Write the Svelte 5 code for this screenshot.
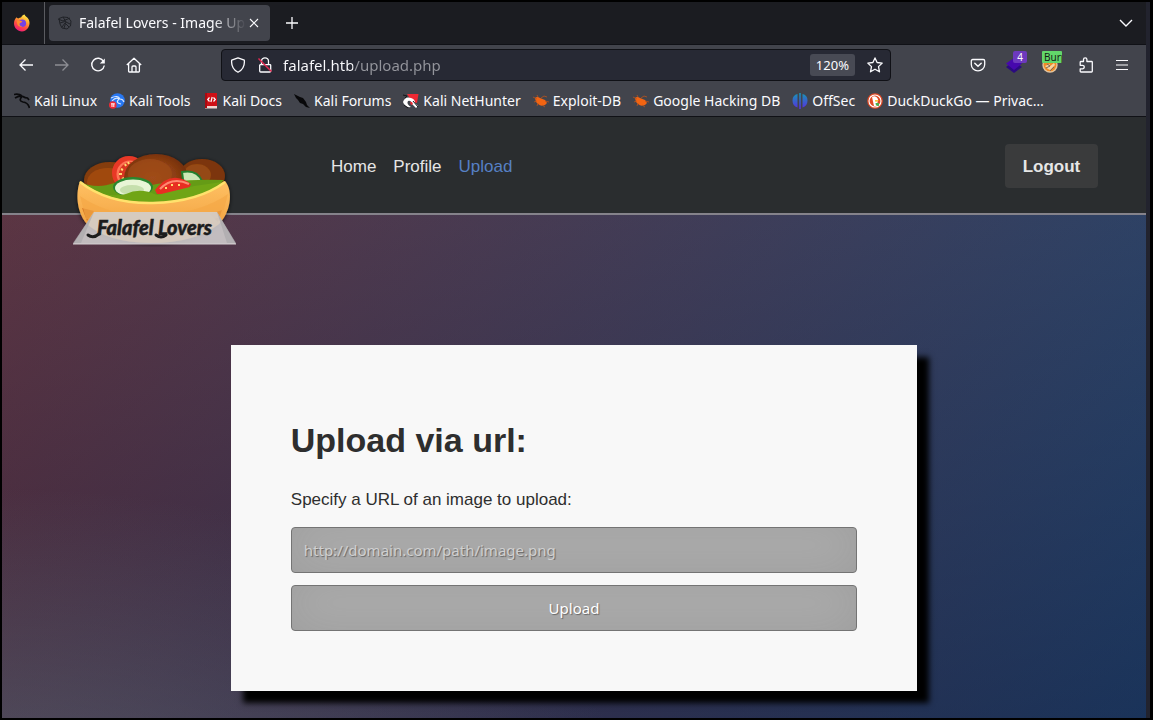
<script>
  const bookmarks = [
    { icon: 'kali', label: 'Kali Linux' },
    { icon: 'tools', label: 'Kali Tools' },
    { icon: 'docs', label: 'Kali Docs' },
    { icon: 'forums', label: 'Kali Forums' },
    { icon: 'nethunter', label: 'Kali NetHunter' },
    { icon: 'exploit', label: 'Exploit-DB' },
    { icon: 'exploit', label: 'Google Hacking DB' },
    { icon: 'offsec', label: 'OffSec' },
    { icon: 'duck', label: 'DuckDuckGo — Privac…' }
  ];
  const links = ['Home', 'Profile', 'Upload'];
  let address = $state('falafel.htb/upload.php');
  let imageUrl = $state('');
</script>

<div class="window">
  <div class="tabs">
    <div class="brand">
      <svg width="18" height="18" viewBox="0 0 18 18">
        <defs>
          <linearGradient id="fox" x1="0.8" y1="0" x2="0.3" y2="1">
            <stop offset="0" stop-color="#fff44f" />
            <stop offset="0.35" stop-color="#ffa930" />
            <stop offset="0.65" stop-color="#ff5040" />
            <stop offset="1" stop-color="#f0157c" />
          </linearGradient>
        </defs>
        <path d="M3.5 3.2C4 4 4.500 4.300 5.300 4.400C6.300 3.600 7.500 3.500 8 3.500C9 1.500 10.500.800 11.600.600C12 2.800 14.400 3 15.600 5.200C18.300 10.400 14.800 17.400 9 17.400C4.600 17.400 1 14 1 9.600C1 7 1.700 5 3.500 3.200Z" fill="url(#fox)" />
        <circle cx="9.300" cy="9.300" r="3.800" fill="#7542e5" />
        <path d="M4 7C6 6 7.600 6.500 9.400 7.500C8.800 8.700 7.200 8.600 6.600 9.500C6.200 11 7.500 12.500 9.600 12.200C6 14 3.500 11 4 7Z" fill="#ff8a2c" />
      </svg>
    </div>
    <div class="tab">
      <svg width="16" height="16" viewBox="0 0 16 16" fill="none" stroke="#202227">
        <path d="M2 3.500L6 2L11 2.500L14 6L13.500 11L10 14L5 13L3 9Z" />
        <path d="M1 4L6 6L13 3M3 8L8 6.500L13 9M5 12L8 8L12 12M6 2L9 7L7 13" />
      </svg>
      <span class="title">Falafel Lovers - Image Upload</span>
      <button class="close" aria-label="Close tab">
        <svg width="10" height="10" viewBox="0 0 10 10" stroke="#fbfbfe" stroke-width="1.100"><path d="M1 1L9 9M9 1L1 9" /></svg>
      </button>
    </div>
    <button class="tool" aria-label="New tab">
      <svg width="14" height="14" viewBox="0 0 14 14" stroke="#fbfbfe" stroke-width="1.300"><path d="M7 1V13M1 7H13" /></svg>
    </button>
    <button class="tool all" aria-label="List all tabs">
      <svg width="14" height="14" viewBox="0 0 14 14" fill="none" stroke="#fbfbfe" stroke-width="1.400"><path d="M1 4L7 10L13 4" /></svg>
    </button>
  </div>

  <div class="toolbar">
    <button class="tool" aria-label="Back">
      <svg width="16" height="16" viewBox="0 0 16 16" fill="none" stroke="#fbfbfe" stroke-width="1.300"><path d="M15 8H2M7.500 2.500L2 8L7.500 13.500" /></svg>
    </button>
    <button class="tool dim" aria-label="Forward" disabled>
      <svg width="16" height="16" viewBox="0 0 16 16" fill="none" stroke="#fbfbfe" stroke-width="1.300"><path d="M1 8H14M8.500 2.500L14 8L8.500 13.500" /></svg>
    </button>
    <button class="tool" aria-label="Reload">
      <svg width="16" height="16" viewBox="0 0 16 16" fill="none" stroke="#fbfbfe" stroke-width="1.400"><path d="M13.600 4.500A6.300 6.300 0 1 0 14.300 8.500" /><path d="M14.800 1.500V6.500H9.800Z" fill="#fbfbfe" stroke="none" /></svg>
    </button>
    <button class="tool" aria-label="Home">
      <svg width="16" height="16" viewBox="0 0 16 16" fill="none" stroke="#fbfbfe" stroke-width="1.300" stroke-linejoin="round"><path d="M.800 8L8 1.200L15.200 8M2.600 6.600V14.200Q2.600 15 3.400 15H12.600Q13.400 15 13.400 14.200V6.600M6 15V10Q6 9 7 9H9Q10 9 10 10V15" /></svg>
    </button>
    <div class="spring"></div>
    <div class="urlbar">
      <svg width="16" height="16" viewBox="0 0 16 16" fill="none" stroke="#fbfbfe" stroke-width="1.300" stroke-linejoin="round"><path d="M8 .900L14.300 3.200Q15.200 11.500 8 15.300Q.800 11.500 1.700 3.200Z" /></svg>
      <svg class="lock" width="16" height="16" viewBox="0 0 16 16" fill="none" stroke="#fbfbfe" stroke-width="1.300"><path d="M4.500 7V4.300A3.500 3.500 0 0 1 11.500 4.300V7M3 7.600H13Q13.700 7.600 13.700 8.300V14Q13.700 15 12.700 15H3.700Q2.700 15 2.700 14V7.600" /><path d="M1.500 1.500L14.500 14.500" stroke="#e22850" stroke-width="1.500" /></svg>
      <input class="address" aria-label="Address" spellcheck="false" bind:value={address} />
      <button class="zoom">120%</button>
      <button class="star" aria-label="Bookmark this page">
        <svg width="16" height="16" viewBox="0 0 16 16" fill="none" stroke="#fbfbfe" stroke-width="1.300" stroke-linejoin="round"><path d="M8 .900L10.100 5.500L15.200 6.100L11.500 9.600L12.500 14.800L8 12.200L3.500 14.800L4.500 9.600L.800 6.100L5.900 5.500Z" /></svg>
      </button>
    </div>
    <div class="spring"></div>
    <button class="tool" aria-label="Save to Pocket">
      <svg width="16" height="16" viewBox="0 0 16 16" fill="none" stroke="#fbfbfe" stroke-width="1.300" stroke-linecap="round"><path d="M2.800 2.500H13.200Q14.700 2.500 14.700 4V7.500A6.700 6.400 0 0 1 1.300 7.500V4Q1.300 2.500 2.800 2.500Z" /><path d="M4.800 6.300L8 9.300L11.200 6.300" stroke-width="1.500" /></svg>
    </button>
    <button class="tool ext" aria-label="Wappalyzer">
      <svg width="16" height="16" viewBox="0 0 16 16"><path d="M0 10L8 4L16 10L8 16Z" fill="#2b0a80" /><path d="M0 6.500L8 1L16 6.500L8 13Z" fill="#4608ad" /></svg>
      <span class="badge">4</span>
    </button>
    <button class="tool ext" aria-label="Proxy">
      <svg width="16" height="16" viewBox="0 0 16 16"><circle cx="8" cy="8" r="7.700" fill="#e3c49e" /><circle cx="8" cy="8" r="6.300" fill="#f18a24" /><path d="M3 9L8 7L7 10L12 6L13 8L8 13L6 12Z" fill="#f6d2a4" /><path d="M5 7L8 9L4 11M12 10L8 14" stroke="#7b6a5c" fill="none" /></svg>
      <span class="badge green">Burp</span>
    </button>
    <button class="tool" aria-label="Extensions">
      <svg width="16" height="16" viewBox="0 0 16 16" fill="none" stroke="#fbfbfe" stroke-width="1.300" stroke-linejoin="round"><path d="M5.500 4.500V2.500A1.700 1.700 0 0 1 8.900 2.500V4.500H13.500Q14.300 4.500 14.300 5.300V14.300Q14.300 15 13.500 15H3Q2.200 15 2.200 14.300V11.800H4.500A1.700 1.700 0 0 0 4.500 8.300H2.200V5.300Q2.200 4.500 3 4.500Z" /></svg>
    </button>
    <button class="tool" aria-label="Open menu">
      <svg width="14" height="14" viewBox="0 0 14 14" stroke="#fbfbfe" stroke-width="1.200"><path d="M1 2.500H13M1 7H13M1 11.500H13" /></svg>
    </button>
  </div>

  <nav class="bookmarks" aria-label="Bookmarks">
    {#each bookmarks as mark}
      <a href="#top">
        <svg width="16" height="16" viewBox="0 0 16 16">
          {#if mark.icon === 'kali'}
            <path d="M0 1.500Q5 .500 8 3M1 5Q5 2.500 9 3.500Q11 5 13.500 5L15 7M8 3.500Q4 8 9 9Q14 9.500 15.500 15" fill="none" stroke="#0b0b0d" stroke-width="1.700" />
          {:else if mark.icon === 'tools'}
            <circle cx="8.500" cy="7.500" r="7.300" fill="#2777f2" />
            <path d="M2 5Q9 1.500 11 6Q14 6 15 9M3 8Q7 3.500 10 6Q6 10 12 11" fill="none" stroke="#d8e8ff" stroke-width="1.100" />
            <circle cx="3.800" cy="12" r="3.800" fill="#ed2b36" />
            <path d="M2 10.800H5.800M3 11V14M4.800 11V14" stroke="#fff" />
          {:else if mark.icon === 'docs'}
            <path d="M2 0H14V15H2Z" fill="#cf1016" /><path d="M2 13H14V15.500H2Z" fill="#f1d5d0" /><path d="M2 0H4V15H2Z" fill="#a90b12" />
            <path d="M6.500 4.500L4.700 6.500L6.500 8.500M10.500 4.500L12.300 6.500L10.500 8.500M9.200 4L7.900 9" fill="none" stroke="#fff" stroke-width="1.200" />
          {:else if mark.icon === 'forums'}
            <path d="M0 1L6 4L9 5L12 9L13 12L16 15L12 14L9 11L6 10L4 7L2 5Z" fill="#08080a" />
          {:else if mark.icon === 'nethunter'}
            <path d="M4 1H15.500L14 10L9 9Z" fill="#ed2833" />
            <path d="M0 9Q2 3 8 5Q12 6 12 10L15 13L13 15L9 11Q8 7 5 8Q3 11 8 14Q2 15 0 9Z" fill="#fff" />
            <path d="M7 9Q9 8 10 11L8 12Z" fill="#ed2833" />
            <path d="M0 2L4 3L2 5M10 8L15 14M1 12L5 15" stroke="#151518" fill="none" />
          {:else if mark.icon === 'exploit'}
            <path d="M2 5Q4 3 7 5L12 7L14 10L12 12Q8 14 5 11L3 9Z" fill="#f26412" />
            <path d="M0 4L4 6M1 9L4 8M5 4L4 2M8 5L11 3L14 4M12 8L16 9M5 10L4 13M9 12L12 14" stroke="#b9541e" stroke-width=".800" fill="none" />
          {:else if mark.icon === 'offsec'}
            <defs><linearGradient id="off" x1="0" y1="0" x2="0" y2="1"><stop offset="0" stop-color="#1597b5" /><stop offset="1" stop-color="#5a2de0" /></linearGradient></defs>
            <path d="M5.500 1V14.500Q.500 13 .500 7.500Q.500 2 5.500 1ZM7.200 0H8.800V16H7.200ZM10.500 1V14.500Q15.500 13 15.500 7.500Q15.500 2 10.500 1Z" fill="url(#off)" />
          {:else}
            <circle cx="8" cy="8" r="7.800" fill="#e04a26" /><circle cx="8" cy="8" r="6" fill="none" stroke="#fff" stroke-width="1.100" />
            <path d="M5 4Q9 2 11 6L10 13L7 13Z" fill="#fff" /><path d="M8 7L12.500 7.500L8.500 9Z" fill="#f9bc16" /><path d="M8.500 10L12 10V13L9 12.500Z" fill="#4bb04f" />
          {/if}
        </svg>
        {mark.label}
      </a>
    {/each}
  </nav>

  <div class="page">
    <header>
      <a class="logo" href="#top" aria-label="Falafel Lovers">
        <svg width="164" height="94" viewBox="0 0 164 94">
          <defs>
            <linearGradient id="bun" x1="0" y1="0" x2="0" y2="1"><stop offset="0" stop-color="#ffc163" /><stop offset="1" stop-color="#ee9a38" /></linearGradient>
            <radialGradient id="ball" cx="0.450" cy="0.500" r="0.600"><stop offset="0" stop-color="#9b4a17" /><stop offset="0.600" stop-color="#8c3e12" /><stop offset="1" stop-color="#6d2b0b" /></radialGradient>
            <filter id="soft" x="-10%" y="-10%" width="120%" height="130%"><feDropShadow dx="0" dy="1" stdDeviation="2" flood-opacity="0.700" /></filter>
          </defs>
          <g filter="url(#soft)">
            <ellipse cx="37" cy="27" rx="26" ry="18" fill="#853c0a" /><ellipse cx="35" cy="29" rx="21" ry="14" fill="#a04a0c" />
            <ellipse cx="129" cy="23" rx="23" ry="17" fill="#7b3509" /><ellipse cx="124" cy="22" rx="14" ry="11" fill="#954812" />
            <circle cx="56" cy="20" r="17" fill="#e83828" /><circle cx="57" cy="21" r="13.500" fill="#ff7657" /><circle cx="58" cy="21" r="12" fill="#d93620" />
            <path d="M48 16l2 1M46 21h3M52 11l1 2M49 26l2-1M55 9l1 2" stroke="#ffdc70" stroke-width="2" />
            <ellipse cx="83" cy="25" rx="32" ry="24" fill="url(#ball)" /><ellipse cx="77" cy="21" rx="22" ry="15" fill="#a44f1d" opacity="0.600" />
            <path d="M109 19Q124 16 129 28L111 34Z" fill="#cce8b6" stroke="#237f2d" stroke-width="2" />
            <path d="M6 29Q21 35 34 32Q48 26 70 34Q104 25 151 27L125 53H34Z" fill="#659b13" />
            <ellipse cx="60" cy="34" rx="20" ry="10" fill="#2a862f" /><ellipse cx="60" cy="35" rx="18" ry="8.500" fill="#e9f5d6" /><ellipse cx="59" cy="37" rx="12" ry="5" fill="#c6dfad" />
            <path d="M82 37Q98 16 118 31L113 41H84Z" fill="#e82e24" /><path d="M87 36Q99 23 116 31" fill="none" stroke="#ff8a71" stroke-width="2" /><path d="M92 35h2M98 32h2M105 32h2" stroke="#ffdd71" stroke-width="2" />
            <path d="M21 37Q37 45 53 41Q67 34 84 42Q105 37 121 33L149 29L130 51H35Z" fill="#6fa516" />
            <path d="M7 28Q34 50 80 49Q126 49 152 28C161 39 157 60 146 71Q122 90 78 90Q32 89 13 70C3 57 3 39 7 28Z" fill="url(#bun)" />
            <path d="M7 29Q35 51 80 50Q125 49 152 29" fill="none" stroke="#ffe26c" stroke-width="2.500" />
            <path d="M9 55L21 58L14 68ZM149 57L137 61L145 69Z" fill="#d87b25" />
            <path d="M7 43Q41 66 84 62Q128 60 155 41L149 64Q93 81 13 66Z" fill="#f5a747" opacity="0.650" />
          </g>
          <path d="M21 59H144L163 91H0Z" fill="#d1cfcf" opacity="0.880" />
          <path d="M21 59L8 90H0ZM144 59L154 90H163Z" fill="#a9a8aa" opacity="0.650" />
          <path d="M0 91H163" stroke="#d5d0d2" />
          <path d="M15 82Q20 86 26 81M83 82Q88 86 93 82" fill="none" stroke="#1c1c1c" stroke-width="3" stroke-linecap="round" />
          <text x="24" y="82" class="logo-text">Falafel Lovers</text>
        </svg>
      </a>
      <nav class="links" aria-label="Main">
        {#each links as link}
          <a href="#top" class:current={link === 'Upload'}>{link}</a>
        {/each}
      </nav>
      <button class="logout">Logout</button>
    </header>
    <main>
      <form onsubmit={(event) => event.preventDefault()}>
        <h1>Upload via url:</h1>
        <label for="image-url">Specify a URL of an image to upload:</label>
        <input id="image-url" type="text" placeholder="http://domain.com/path/image.png" bind:value={imageUrl} />
        <button>Upload</button>
      </form>
    </main>
  </div>
</div>

<style>
  :global(body) { margin: 0; }
  .window, .window * { box-sizing: border-box; }
  .window {
    min-height: 100vh;
    display: flex;
    flex-direction: column;
    border: 2px solid #000;
    border-right-width: 3px;
    padding-right: 4px;
    background: #22232e;
    color: #fbfbfe;
    font: 15px/20px "Noto Sans", sans-serif;
  }
  button, input { font: inherit; color: inherit; }
  button { border: 0; padding: 0; background: none; }
  a { color: inherit; text-decoration: none; }
  svg { display: block; flex: none; }

  .tabs { display: flex; align-items: center; height: 43px; background: #1b1c21; border-bottom: 1px solid #101116; }
  .brand { display: grid; place-items: center; width: 43px; height: 100%; border-right: 1px solid #5a5b60; padding-right: 2px; }
  .tab {
    display: flex; align-items: center; width: 221px; height: 36px; margin-left: 4px; padding: 0 8px;
    background: #42444c; border-radius: 4px; font-size: 14px;
  }
  .title {
    flex: 1; min-width: 0; margin-left: 6px; overflow: hidden; white-space: nowrap;
    mask-image: linear-gradient(to right, #000 80%, transparent);
  }
  .close { display: grid; place-items: center; width: 16px; height: 20px; }
  .tool { display: grid; place-items: center; flex: none; width: 36px; height: 32px; }
  .tabs > .tool { margin-left: 4px; }
  .tabs > .all { margin-left: auto; margin-right: 2px; }
  .dim { opacity: 0.4; }

  .toolbar { display: flex; align-items: center; height: 40px; padding: 0 6px; background: #42444c; }
  .spring { flex: 69; }
  .urlbar {
    display: flex; align-items: center; flex: 652; min-width: 0; height: 32px; padding: 0 7px 0 8px;
    background: #272934; border: 1px solid #101116; border-radius: 4px;
  }
  .lock { margin-left: 11px; }
  .address {
    flex: 1; min-width: 0; height: 28px; margin-left: 10px; padding: 0; border: 0; outline: 0;
    color: transparent; caret-color: #fbfbfe;
    background: linear-gradient(to right, #fbfbfe 70px, #94959c 70px);
    -webkit-background-clip: text; background-clip: text;
  }
  .zoom { width: 45px; height: 22px; border-radius: 3px; background: #484a54; font-size: 13px; }
  .star { margin-left: 12px; }
  .ext { position: relative; }
  .badge {
    position: absolute; top: 2px; right: 5px; width: 14px; height: 12px; overflow: hidden;
    background: #6d39bd; border-radius: 2px; font-size: 10px; line-height: 12px;
  }
  .badge.green { width: 20px; right: 6px; background: #62d66a; color: #151a16; text-align: left; padding-left: 2px; border-radius: 1px; }

  .bookmarks { display: flex; gap: 12px; height: 32px; padding: 0 12px; background: #42444c; border-bottom: 1px solid #101116; overflow: hidden; font-size: 14px; }
  .bookmarks a { display: flex; align-items: center; gap: 4px; white-space: nowrap; }

  .page { display: flex; flex-direction: column; flex: 1; font: 17px/20px "Liberation Sans", sans-serif; }
  header {
    display: flex; align-items: flex-start; height: 98px; padding: 27px 48px 0 71px;
    background: #2a2d2f; border-bottom: 2px solid #85838b; color: #e6e6e6;
  }
  .logo { position: relative; margin-top: 9px; }
  .logo-text { font: italic 900 20px Lato, sans-serif; fill: #1c1c1c; stroke: #1c1c1c; stroke-width: 0.5px; }
  .links { display: flex; gap: 17px; margin: 13px auto 0 94px; }
  .current { color: #5680c4; }
  .logout { width: 93px; height: 44px; padding-top: 2px; border-radius: 4px; background: #3a3b3c; font-weight: bold; }
  main {
    flex: 1; padding: 130px 0 27px;
    background:
      radial-gradient(ellipse at 0% 100%, rgba(104, 128, 138, 0.4) 10%, rgba(138, 114, 76, 0) 40%),
      linear-gradient(to bottom, rgba(57, 173, 219, 0.25), rgba(42, 60, 87, 0.4)),
      linear-gradient(135deg, #670d10, #092756);
    background-size: 100% 125%;
  }
  form {
    display: flex; flex-direction: column; width: 60%; margin: 0 auto; padding: 75px 60px 60px;
    background: #f8f8f8; box-shadow: 12px 12px 6px #000; color: #2e2e2e;
  }
  h1 { margin: 0 0 30px; font-size: 34px; line-height: 40px; }
  label { margin-bottom: 17px; }
  form input, form button {
    height: 46px; padding: 0 12px; border: 1px solid #747474; border-radius: 4px; background: rgba(0, 0, 0, 0.3);
    box-shadow: inset 0 -5px 45px rgba(100, 100, 100, 0.2); color: #fff; text-shadow: 1px 1px 1px rgba(0, 0, 0, 0.4);
    font: 15px/20px "Noto Sans", sans-serif;
  }
  form input::placeholder { color: #d0d0d0; opacity: 1; }
  form button { margin-top: 12px; }
</style>
